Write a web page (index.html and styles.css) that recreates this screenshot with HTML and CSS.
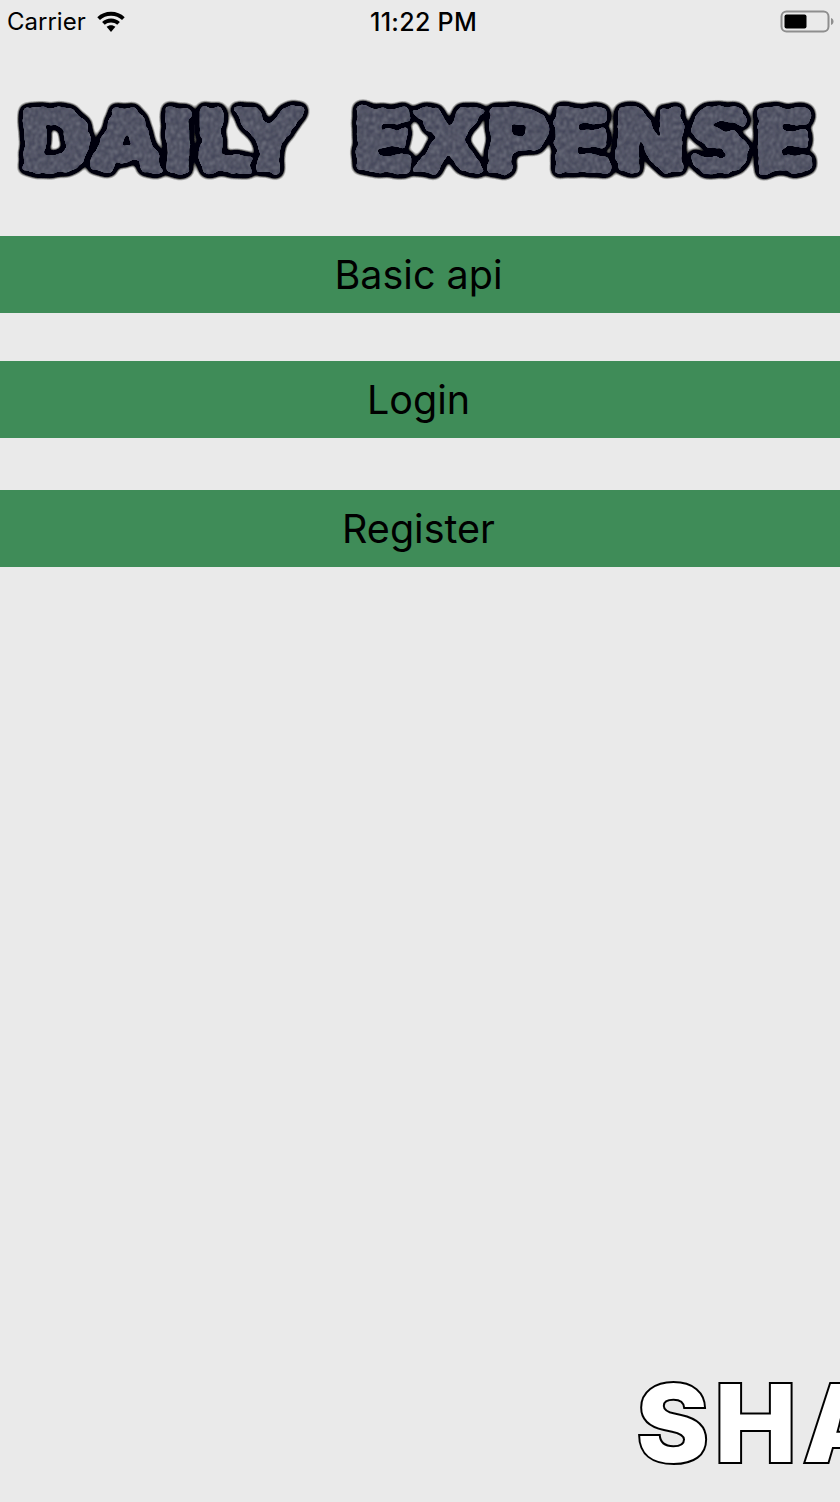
FILE: index.html
```html
<!DOCTYPE html>
<html lang="en">
<head>
    <meta charset="UTF-8">
    <meta name="viewport" content="width=device-width, initial-scale=1.0">
    <title>Daily Expense</title>
    <link rel="stylesheet" href="styles.css">
</head>
<body>

<div class="screen">
    <!-- Status bar -->
    <div class="status-bar">
        <div class="status-left">
            <span class="carrier">Carrier</span>
            <svg class="wifi" width="30" height="24" viewBox="0 0 28 22">
                <path d="M14 1.500c4.900 0 9.400 1.900 12.800 5l-2.500 2.600C21.600 6.700 18 5.200 14 5.200S6.400 6.700 3.700 9.100L1.200 6.500C4.600 3.400 9.100 1.500 14 1.500z"/>
                <path d="M14 7.800c3.200 0 6.100 1.200 8.300 3.200l-2.500 2.600c-1.600-1.400-3.600-2.200-5.800-2.200s-4.200.8-5.800 2.200L5.700 11c2.200-2 5.100-3.200 8.300-3.200z"/>
                <path d="M14 14c1.600 0 3 .6 4.100 1.500L14 20.300l-4.100-4.800C11 14.600 12.400 14 14 14z"/>
            </svg>
        </div>
        <div class="status-time">11:22 PM</div>
        <div class="status-right">
            <svg class="battery" width="54" height="24" viewBox="0 0 54 24">
                <rect x="1.500" y="1.500" width="47" height="20" rx="5" fill="none" stroke="#8e8e8e" stroke-width="2"/>
                <rect x="4.500" y="4.500" width="22" height="14" rx="2" fill="#000"/>
                <path d="M51 8c1.500.5 2.500 1.800 2.500 3.500S52.500 14.500 51 15z" fill="#8e8e8e"/>
            </svg>
        </div>
    </div>

    <!-- Logo -->
    <div class="logo">
        <svg width="840" height="100" viewBox="0 0 840 100">
            <defs>
                <filter id="rough" filterUnits="userSpaceOnUse" x="0" y="0" width="840" height="100">
                    <feTurbulence type="fractalNoise" baseFrequency="0.07" numOctaves="3" seed="4" result="wobble"/>
                    <feDisplacementMap in="SourceGraphic" in2="wobble" scale="9" xChannelSelector="R" yChannelSelector="G" result="shape"/>
                    <feGaussianBlur in="shape" stdDeviation="1.800" result="shapeBlur"/>
                    <feComponentTransfer in="shapeBlur" result="fat">
                        <feFuncA type="linear" slope="9" intercept="-3"/>
                    </feComponentTransfer>
                    <feGaussianBlur in="fat" stdDeviation="3.500" result="outBlur"/>
                    <feComponentTransfer in="outBlur" result="outHard">
                        <feFuncA type="linear" slope="10" intercept="-0.300"/>
                    </feComponentTransfer>
                    <feFlood flood-color="#040507"/>
                    <feComposite in2="outHard" operator="in" result="outline"/>
                    <feTurbulence type="fractalNoise" baseFrequency="0.45 0.25" numOctaves="2" seed="9" result="grain"/>
                    <feColorMatrix in="grain" type="matrix" values="0 0 0 0 0.55  0 0 0 0 0.57  0 0 0 0 0.65  0.7 0 0 0 -0.3" result="light"/>
                    <feGaussianBlur in="light" stdDeviation="0.800" result="lightSoft"/>
                    <feComposite in="lightSoft" in2="fat" operator="in" result="speck"/>
                    <feMerge result="all">
                        <feMergeNode in="outline"/>
                        <feMergeNode in="fat"/>
                        <feMergeNode in="speck"/>
                    </feMerge>
                    <feGaussianBlur in="all" stdDeviation="0.600"/>
                </filter>
            </defs>
            <g class="logo-text" filter="url(#rough)">
                <text x="18" y="80" textLength="284" lengthAdjust="spacingAndGlyphs">DAILY</text>
                <text x="352" y="80" textLength="463" lengthAdjust="spacingAndGlyphs">EXPENSE</text>
            </g>
        </svg>
    </div>

    <!-- Menu -->
    <button class="menu-btn btn-basic">Basic api</button>
    <button class="menu-btn btn-login">Login</button>
    <button class="menu-btn btn-register">Register</button>

    <!-- Footer ticker, cut by the right edge -->
    <div class="ticker">SHARE</div>
</div>

</body>
</html>
```

FILE: styles.css
```css
body {
    margin: 0;
    padding: 0;
    background-color: #eaeaea;
    font-family: 'Inter', 'Liberation Sans', sans-serif;
    color: #000;
}

.screen {
    width: 840px;
    height: 1502px;
    display: flex;
    flex-direction: column;
    overflow: hidden;
}

.status-bar {
    height: 43px;
    display: grid;
    grid-template-columns: 1fr auto 1fr;
    align-items: center;
    padding: 0 6px 0 7px;
    box-sizing: border-box;
}

.status-left {
    display: flex;
    align-items: center;
    gap: 10px;
}

.carrier {
    font-size: 24px;
}

.status-time {
    font-size: 25px;
    font-weight: 500;
    letter-spacing: 0.3px;
    margin-left: 6px;
}

.status-right {
    display: flex;
    justify-content: flex-end;
}

.logo {
    margin-top: 47px;
    height: 100px;
}

.logo svg {
    display: block;
}

.logo-text text {
    font-family: 'DejaVu Sans', sans-serif;
    font-weight: 700;
    font-size: 82px;
    fill: #45475a;
    stroke: #45475a;
    stroke-width: 5px;
    stroke-linejoin: round;
}

.menu-btn {
    display: block;
    width: 100%;
    height: 77px;
    padding: 0 3px 0 0;
    border: none;
    background-color: #3f8c58;
    color: #000;
    font-family: inherit;
    font-size: 39.500px;
}

.btn-basic {
    margin-top: 46px;
}

.btn-login {
    margin-top: 48px;
}

.btn-register {
    margin-top: 52px;
}

.ticker {
    margin-top: auto;
    margin-bottom: 12px;
    padding-left: 636px;
    white-space: nowrap;
    font-family: 'Inter', 'Liberation Sans', sans-serif;
    font-weight: 900;
    font-size: 110px;
    letter-spacing: 5px;
    line-height: 134px;
    color: #fff;
    -webkit-text-stroke: 2px #000;
}
```
